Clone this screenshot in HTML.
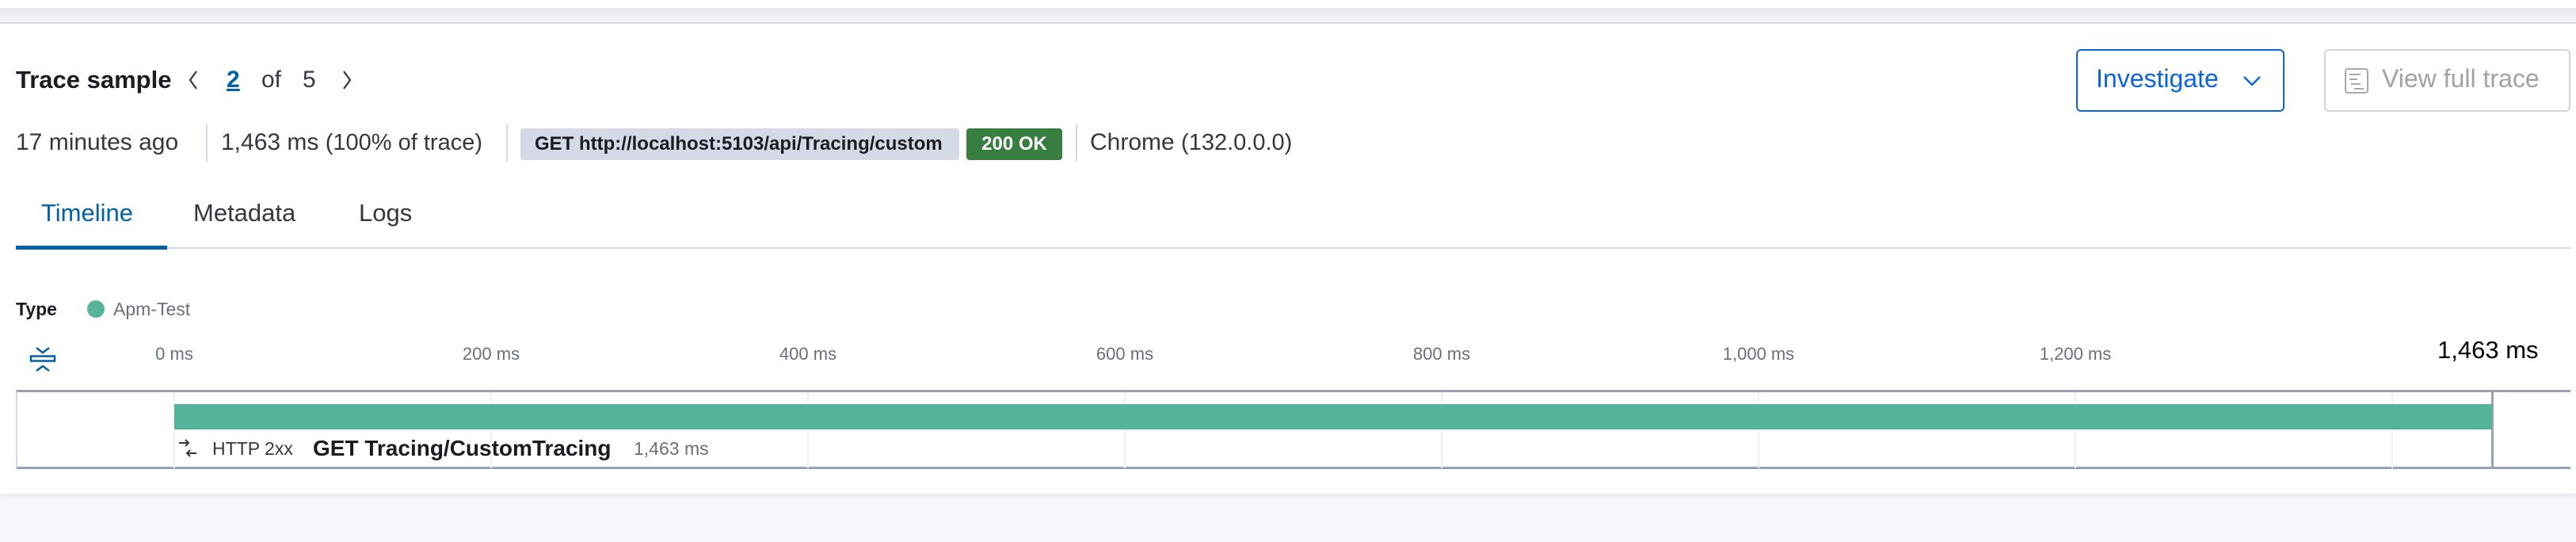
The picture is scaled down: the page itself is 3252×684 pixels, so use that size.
<!DOCTYPE html>
<html><head><meta charset="utf-8"><style>
*{margin:0;padding:0;box-sizing:border-box}
body{width:3252px;height:684px;background:#f7f8fc;font-family:"Liberation Sans",sans-serif;color:#343741;position:relative;overflow:hidden}
.a{position:absolute;white-space:nowrap}
.lbl{font-size:22px;color:#69707d;transform:translateX(-50%);top:434px}
.grid{position:absolute;top:495px;height:96px;width:2px;background:#eef0f4}
.sep{position:absolute;top:157px;height:47px;width:2px;background:#d3dae6}
</style></head><body>
<div class="a" style="left:0;top:0;width:3252px;height:10px;background:#fff"></div>
<div class="a" style="left:0;top:10px;width:3252px;height:19px;background:linear-gradient(#e6e9f0,#f5f6f9)"></div>
<div class="a" style="left:0;top:28px;width:3252px;height:595px;background:#fff;border-top:2px solid #d3dae6;box-shadow:0 3px 6px rgba(0,0,0,.08)"></div>

<div class="a" style="left:20px;top:83px;font-size:31px;font-weight:bold;color:#1a1c21">Trace sample</div>
<svg class="a" style="left:236px;top:88px" width="16" height="26" viewBox="0 0 16 26"><path d="M12 2 L4 13 L12 24" fill="none" stroke="#343741" stroke-width="2.2"/></svg>
<div class="a" style="left:286px;top:84px;font-size:30px;font-weight:bold;color:#0061a6;text-decoration:underline">2</div>
<div class="a" style="left:330px;top:84px;font-size:30px;color:#343741">of</div>
<div class="a" style="left:382px;top:84px;font-size:30px;color:#343741">5</div>
<svg class="a" style="left:430px;top:88px" width="16" height="26" viewBox="0 0 16 26"><path d="M4 2 L12 13 L4 24" fill="none" stroke="#343741" stroke-width="2.2"/></svg>

<div class="a" style="left:2621px;top:62px;width:263px;height:79px;border:2px solid #0b64dd;border-radius:6px"></div>
<div class="a" style="left:2646px;top:81px;font-size:32px;color:#0b64dd">Investigate</div>
<svg class="a" style="left:2831px;top:94px" width="24" height="16" viewBox="0 0 24 16"><path d="M2 3 L12 13 L22 3" fill="none" stroke="#0b64dd" stroke-width="2.4"/></svg>
<div class="a" style="left:2934px;top:62px;width:311px;height:79px;border:2px solid #d3d3d3;border-radius:6px"></div>
<svg class="a" style="left:2958px;top:85px" width="34" height="34" viewBox="0 0 34 34"><rect x="3" y="2" width="28" height="30" rx="3" fill="none" stroke="#a8a8a8" stroke-width="2"/><path d="M8 9H22M8 15H18M10 21H22M14 27H26" stroke="#a8a8a8" stroke-width="2"/></svg>
<div class="a" style="left:3007px;top:81px;font-size:32px;color:#a2a2a2">View full trace</div>

<div class="a" style="left:20px;top:163px;font-size:30px">17 minutes ago</div>
<div class="sep" style="left:260px"></div>
<div class="a" style="left:279px;top:163px;font-size:30px">1,463 ms <span style="font-size:29px">(100% of trace)</span></div>
<div class="sep" style="left:639px"></div>
<div class="a" style="left:657px;top:162px;width:554px;height:40px;background:#d3dae6;border-radius:4px;font-size:24px;font-weight:bold;color:#1a1c21;line-height:40px;padding-left:18px">GET http://localhost:5103/api/Tracing/custom</div>
<div class="a" style="left:1220px;top:162px;width:121px;height:40px;background:#387e41;border-radius:4px;font-size:24px;font-weight:bold;color:#fff;line-height:40px;text-align:center">200 OK</div>
<div class="sep" style="left:1358px"></div>
<div class="a" style="left:1376px;top:163px;font-size:30px">Chrome <span style="font-size:29px">(132.0.0.0)</span></div>

<div class="a" style="left:52px;top:251px;font-size:31px;color:#0061a6">Timeline</div>
<div class="a" style="left:244px;top:251px;font-size:31px">Metadata</div>
<div class="a" style="left:453px;top:251px;font-size:31px">Logs</div>
<div class="a" style="left:20px;top:312px;width:3225px;height:2px;background:#d3dae6"></div>
<div class="a" style="left:20px;top:310px;width:191px;height:5px;background:#0061a6"></div>

<div class="a" style="left:20px;top:377px;font-size:23px;font-weight:bold;color:#1a1c21">Type</div>
<div class="a" style="left:110px;top:379px;width:22px;height:22px;border-radius:50%;background:#54b399"></div>
<div class="a" style="left:143px;top:377px;font-size:23px;color:#69707d">Apm-Test</div>

<svg class="a" style="left:36px;top:436px" width="36" height="36" viewBox="0 0 36 36"><path d="M10 3 L18 9 L26 3" fill="none" stroke="#0061a6" stroke-width="2.5"/><rect x="3" y="13.5" width="30" height="6" fill="none" stroke="#0061a6" stroke-width="2.5"/><path d="M10 32 L18 26 L26 32" fill="none" stroke="#0061a6" stroke-width="2.5"/></svg>
<div class="a lbl" style="left:220px">0 ms</div>
<div class="a lbl" style="left:620px">200 ms</div>
<div class="a lbl" style="left:1020px">400 ms</div>
<div class="a lbl" style="left:1420px">600 ms</div>
<div class="a lbl" style="left:1820px">800 ms</div>
<div class="a lbl" style="left:2220px">1,000 ms</div>
<div class="a lbl" style="left:2620px">1,200 ms</div>
<div class="a" style="left:3077px;top:424px;font-size:31px;color:#000">1,463 ms</div>

<div class="a" style="left:20px;top:492px;width:3225px;height:100px;border-top:3px solid #98a2b3;border-bottom:3px solid #98a2b3;border-left:2px solid #d3dae6"></div>
<div class="grid" style="left:219px"></div>
<div class="grid" style="left:619px"></div>
<div class="grid" style="left:1019px"></div>
<div class="grid" style="left:1419px"></div>
<div class="grid" style="left:1819px"></div>
<div class="grid" style="left:2219px"></div>
<div class="grid" style="left:2619px"></div>
<div class="grid" style="left:3019px"></div>
<div class="a" style="left:3145px;top:495px;width:3px;height:96px;background:#98a2b3"></div>
<div class="a" style="left:220px;top:510px;width:2926px;height:32px;background:#54b399"></div>
<svg class="a" style="left:224px;top:553px" width="26" height="26" viewBox="0 0 26 26"><path d="M2 6H14M10 2L14 6L10 10" fill="none" stroke="#343741" stroke-width="2"/><path d="M24 19H12M16 15L12 19L16 23" fill="none" stroke="#343741" stroke-width="2"/></svg>
<div class="a" style="left:268px;top:553px;font-size:23px">HTTP 2xx</div>
<div class="a" style="left:395px;top:550px;font-size:28px;font-weight:bold;color:#1a1c21">GET Tracing/CustomTracing</div>
<div class="a" style="left:800px;top:553px;font-size:23px;color:#69707d">1,463 ms</div>
</body></html>
